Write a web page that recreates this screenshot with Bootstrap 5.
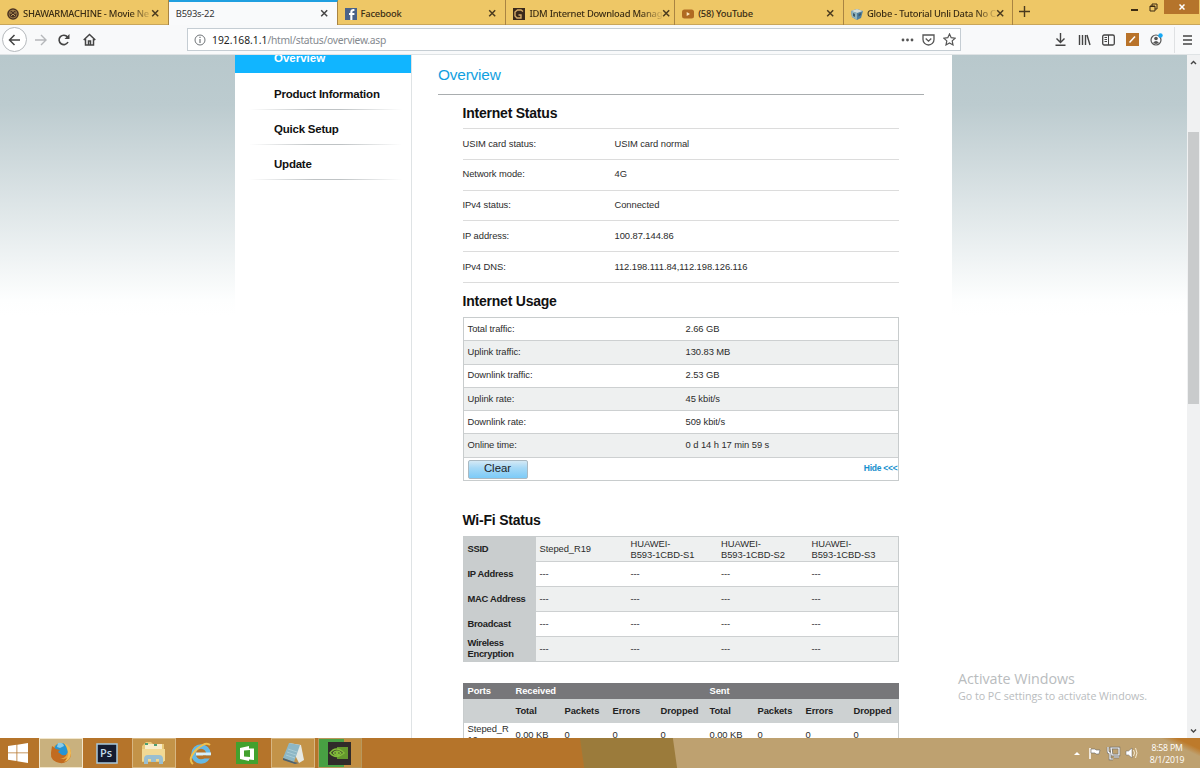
<!DOCTYPE html>
<html lang="en">
<head>
    <meta charset="UTF-8">
    <meta name="viewport" content="width=device-width, initial-scale=1.0">
    <title>B593s-22</title>
    <link href="https://cdn.jsdelivr.net/npm/bootstrap@5.3.3/dist/css/bootstrap.min.css" rel="stylesheet">
    <style>
        :root {
            --gold: #eec766;
            --huawei-blue: #11b5ff;
        }
        body {
            width: 1200px;
            height: 768px;
            font-family: "Liberation Sans", Arial, sans-serif;
            font-size: 9.4px;
            line-height: 11px;
            letter-spacing: -.06px;
            color: #2c2c2c;
        }
        svg { display: block; flex: none; }

        /* browser chrome */
        .tab-strip {
            height: 25px;
            background: var(--gold);
            border-bottom: 1px solid #c9a65a;
            font-family: "Noto Sans", "Open Sans", sans-serif;
            font-size: 9.4px;
            letter-spacing: -.24px;
            color: #3a2c14;
        }
        .tab-item {
            width: 168.8px;
            height: 25px;
            padding: 2px 8px 0 7px;
            border-right: 1px solid #a98442;
        }
        .tab-item:not(.current) { font-weight: 500; }
        .tab-item.current {
            background: #f9fafb;
            border-top: 2px solid #1f9fe0;
            padding-top: 0;
            color: #333;
        }
        .tab-label { flex: 1; height: 14px; line-height: 14px; margin-left: 4px; white-space: nowrap; }
        .fade-end { -webkit-mask-image: linear-gradient(90deg, #000 84%, transparent 102%); mask-image: linear-gradient(90deg, #000 84%, transparent 102%); }
        .new-tab { padding: 6px 0 0 6px; }
        .win-min { margin: 9px 11px 0 0; }
        .win-max { margin: 3px 6px 0 0; }
        .win-close { width: 35px; height: 14px; margin-right: 1px; background: #b5742b; }
        .tool-row { height: 30px; background: #f8f9fa; border-bottom: 1px solid #dfe3e5; }
        .back-btn { width: 25px; height: 25px; margin-left: 2px; border: 1px solid #b5b9bc; background: #fff; }
        .nav-icons { width: 187px; }
        .url-field {
            width: 774px;
            height: 23px;
            border: 1px solid #c5cdd3;
            background: #fff;
            padding: 0 4px 0 6px;
            font-family: "Noto Sans", "Open Sans", sans-serif;
            font-size: 10.3px;
            letter-spacing: -.28px;
            color: #858a8f;
        }
        .url-text { margin-left: 6px; padding-top: 2px; }
        .url-field b { font-weight: 400; color: #222; letter-spacing: 0; }
        .tool-icons { padding-left: 93px; gap: 11px; }

        /* router page */
        .viewport-area { height: 683px; overflow: hidden; }
        .page-bg { width: 1187px; background: linear-gradient(#b8c8cc 0, #bccbcf 50px, #fdfefe 245px, #fff 260px); }
        .router-page { width: 717px; margin-left: 235px; background: #fff; }
        .side-menu { width: 177px; border-right: 1px solid #dfe3e5; font-size: 11.5px; letter-spacing: -.22px; font-weight: 700; color: #111; }
        .menu-link { height: 35.2px; padding: 12px 0 0 39px; line-height: 14px; background: linear-gradient(90deg, transparent 8%, #bfc3c5 45%, #bfc3c5 60%, transparent 95%) bottom / 100% 1px no-repeat; }
        .menu-current { height: 18px; margin-bottom: 1.5px; background: var(--huawei-blue); color: #fff; padding: 0 0 0 39px; line-height: 14px; letter-spacing: 0; }
        .menu-current span { display: block; margin-top: -4px; height: 14px; }
        .main-col { padding-left: 26px; }
        .page-title { width: 486px; height: 40px; padding-top: 11px; border-bottom: 1px solid #a9adaf; font-size: 15.4px; letter-spacing: -.2px; line-height: 18px; color: #129fdf; }
        .section-body { width: 436px; margin-left: 24.5px; }
        .section-title { font-size: 14px; font-weight: 700; letter-spacing: -.22px; line-height: 17px; color: #111; margin: 0; }
        .title-first { height: 33px; padding-top: 10px; }
        .title-usage { height: 34px; padding-top: 10px; }
        .title-wifi { height: 55px; padding-top: 31px; }
        .status-list { border-top: 1px solid #dcdcdc; }
        .status-row { height: 30.8px; padding-bottom: 1.5px; border-bottom: 1px solid #dcdcdc; }
        .status-row span:first-child { width: 152px; }
        .usage-box { border: 1px solid #c8cccd; }
        .usage-row { height: 23.3px; padding: 0 0 2px 4px; border-bottom: 1px solid #cdd0d1; }
        .usage-row:nth-child(even) { background: #eef0f0; }
        .usage-row span:first-child { width: 218px; }
        .usage-foot { height: 22.6px; padding-left: 4px; }
        .clear-btn {
            width: 60px; height: 19px;
            padding: 0 0 3px;
            border: 1px solid #aab9c2;
            border-radius: 2px;
            background: linear-gradient(#d4e9f5, #a7d9f6 40%, #7ccbf8);
            font-size: 11.4px;
            line-height: 14px;
            color: #222;
        }
        .hide-link { color: #168fcd; font-weight: 700; font-size: 8.5px; letter-spacing: -.25px; padding-bottom: 1px; }
        .wifi-box { border: 1px solid #c8cccd; }
        .wifi-row { display: grid; grid-template-columns: 72px 91px 90.5px 90.5px 90px; height: 24.8px; }
        .wifi-row > div { display: flex; align-items: center; padding: 0 0 1px 4px; border-bottom: 1px solid #cdd0d1; }
        .wifi-row > div:first-child { background: #c9cdce; border-color: #c9cdce; font-weight: 700; letter-spacing: -.28px; color: #222; }
        .wifi-row:nth-child(odd) { background: #eef0f0; }
        .wifi-row:last-child > div { border-bottom: 0; }
        .ports-box { margin-top: 21px; border: 1px solid #c8cccd; border-top: 0; }
        .ports-row { display: grid; grid-template-columns: 48px 49px 48px 48px 49px 48px 48px 48px 48px; padding-left: 4px; align-items: center; }
        .ports-head { height: 16px; background: #77777a; color: #fff; font-weight: 700; letter-spacing: -.1px; margin: 0 -1px; padding: 0 0 2px 5px; }
        .ports-sub { height: 24px; padding-bottom: 2px; background: #cdd1d2; color: #222; font-weight: 700; letter-spacing: -.1px; }
        .scroll-col { width: 13px; background: #f0f1f2; }
        .scroll-thumb { width: 11px; height: 272px; margin-top: 63px; background: #c9cbcc; }
        .activate-note { position: absolute; left: 958px; top: 670px; color: #b9bcbe; font-family: "Open Sans", "Noto Sans", sans-serif; font-size: 10.7px; letter-spacing: -.03px; line-height: 16px; }
        .activate-note div { font-size: 14.3px; line-height: 18px; }

        /* taskbar */
        .task-bar {
            height: 30px;
            background:
                linear-gradient(205deg, #bd7a2b 10px, transparent 17px),
                linear-gradient(82deg, #b5742a 0 578px, #9b7b3b 579px 670px, #bea170 671px);
        }
        .task-btn { width: 44px; height: 30px; display: flex; align-items: center; justify-content: center; margin-right: 2.5px; border: 1px solid transparent; }
        .task-start { width: 36px; }
        .task-open { background: #c39348; border-color: #d7b682; }
        .task-front { background: #c9b17e; border-color: #f2e6cb; }
        .task-green { background: linear-gradient(90deg, #48a043 60%, #c18e42 60%); border: 1px solid #b9985c; }
        .tray-clock { width: 52px; margin-right: 7px; font-family: "Open Sans", "Noto Sans", sans-serif; font-size: 8.7px; line-height: 12.5px; color: #fff; letter-spacing: -.2px; padding-top: 2px; }
    </style>
</head>
<body class="d-flex flex-column overflow-hidden bg-white">

<div class="tab-strip d-flex flex-shrink-0">
    <div class="tab-item d-flex align-items-center">
        <svg width="12" height="12" viewBox="0 0 12 12"><circle cx="6" cy="6" r="5.8" fill="#4b3321"/><circle cx="6" cy="6" r="4" fill="none" stroke="#a8854e" stroke-width=".8"/><path d="M3 5h2M7 5h2M4 8l2-2 2 2M6 2v2" stroke="#c19c5c" fill="none"/></svg>
        <div class="tab-label fade-end">SHAWARMACHINE - Movie Ne</div>
        <svg width="9" height="9" viewBox="0 0 9 9"><path d="M1.2 1.2l6 6m0-6l-6 6" stroke="#4a3a1e" stroke-width="1.5"/></svg>
    </div>
    <div class="tab-item current d-flex align-items-center">
        <div class="tab-label ms-0">B593s-22</div>
        <svg width="9" height="9" viewBox="0 0 9 9"><path d="M1.2 1.2l6 6m0-6l-6 6" stroke="#444" stroke-width="1.5"/></svg>
    </div>
    <div class="tab-item d-flex align-items-center">
        <svg width="12" height="12" viewBox="0 0 12 12"><path d="M0 0h12v12H0z" fill="#4a6288"/><path d="M7.4 12V7h2V5h-2V4q0-1.2 2-1V1Q5.3.7 5.3 4v1H4v2h1.3v5z" fill="#fff"/></svg>
        <div class="tab-label">Facebook</div>
        <svg width="9" height="9" viewBox="0 0 9 9"><path d="M1.2 1.2l6 6m0-6l-6 6" stroke="#4a3a1e" stroke-width="1.5"/></svg>
    </div>
    <div class="tab-item d-flex align-items-center">
        <svg width="12" height="12" viewBox="0 0 12 12"><path d="M0 0h12v12H0z" fill="#3a291b"/><path d="M10 3.5L8 2H4.500L2 4v4l2 2h4V7H5.500" fill="none" stroke="#d5aa68" stroke-width="1.4"/></svg>
        <div class="tab-label fade-end">IDM Internet Download Manag</div>
        <svg width="9" height="9" viewBox="0 0 9 9"><path d="M1.2 1.2l6 6m0-6l-6 6" stroke="#4a3a1e" stroke-width="1.5"/></svg>
    </div>
    <div class="tab-item d-flex align-items-center">
        <svg width="12" height="12" viewBox="0 0 12 12"><rect y="1.5" width="12" height="9" rx="2.5" fill="#b06a22"/><path d="M4.7 4l3.3 2-3.3 2z" fill="#fbe6bd"/></svg>
        <div class="tab-label">(58) YouTube</div>
        <svg width="9" height="9" viewBox="0 0 9 9"><path d="M1.2 1.2l6 6m0-6l-6 6" stroke="#4a3a1e" stroke-width="1.5"/></svg>
    </div>
    <div class="tab-item d-flex align-items-center">
        <svg width="12" height="12" viewBox="0 0 12 12"><path d="M0 3l6-2 6 2-2 7-4 2-5-3z" fill="#4e7fa0"/><path d="M0 3l6-2 6 2-6 2z" fill="#d3dbd6"/><path d="M6 5v7l-5-3-1-6z" fill="#8fb3bd"/><path d="M2 5l2 1v3L2 8zM7.500 6L10 5v2L7.500 8.500z" fill="#3e5968"/></svg>
        <div class="tab-label fade-end">Globe - Tutorial Unli Data No C</div>
        <svg width="9" height="9" viewBox="0 0 9 9"><path d="M1.2 1.2l6 6m0-6l-6 6" stroke="#4a3a1e" stroke-width="1.5"/></svg>
    </div>
    <div class="new-tab flex-fill"><svg width="11" height="11" viewBox="0 0 11 11"><path d="M5.500 0v11M0 5.500h11" stroke="#4a3a1e" stroke-width="1.4"/></svg></div>
    <svg class="win-min" width="7" height="2"><path d="M0 0h7v2H0z" fill="#3c2b12"/></svg>
    <svg class="win-max" width="9" height="9" viewBox="0 0 9 9" fill="none" stroke="#3c2b12"><path d="M1 3h5v5H1zM1 3.500h5M3 3V1h5v5H6"/></svg>
    <div class="win-close d-flex align-items-center justify-content-center"><svg width="6" height="6" viewBox="0 0 6 6"><path d="M.5.5l5 5m0-5l-5 5" stroke="#fff" stroke-width="1.5"/></svg></div>
</div>

<div class="tool-row d-flex align-items-center flex-shrink-0">
    <div class="nav-icons d-flex align-items-center flex-shrink-0">
        <div class="back-btn rounded-circle d-flex align-items-center justify-content-center"><svg width="13" height="12" viewBox="0 0 13 12"><path d="M12 6H1.500M6.500 1l-5 5 5 5" fill="none" stroke="#444" stroke-width="1.5"/></svg></div>
        <svg class="ms-2" width="12" height="12" viewBox="0 0 12 12"><path d="M0 6h10.500M6 1l5 5-5 5" fill="none" stroke="#b5b7ba" stroke-width="1.4"/></svg>
        <svg class="ms-2 me-1" width="20" height="14" viewBox="0 0 20 14"><path d="M12.500 4A4.700 4.700 0 1 0 13 9" fill="none" stroke="#444" stroke-width="1.6"/><path d="M14.500 1v5h-5z" fill="#444"/></svg>
        <svg class="ms-1" width="13" height="13" viewBox="0 0 13 13"><path d="M.7 7l5.800-5.500L12.300 7M2.500 6v6h8V6M5.500 12V8h2v4" fill="none" stroke="#444" stroke-width="1.5"/></svg>
    </div>
    <div class="url-field d-flex align-items-center flex-shrink-0">
        <svg width="12" height="12" viewBox="0 0 12 12"><circle cx="6" cy="6" r="5" fill="none" stroke="#707478"/><path d="M6 5v4M6 2.800v1.300" stroke="#707478" stroke-width="1.2"/></svg>
        <div class="url-text flex-fill"><b>192.168.1.1</b>/html/status/overview.asp</div>
        <svg width="13" height="4" viewBox="0 0 13 4" fill="#555"><circle cx="2" cy="2" r="1.4"/><circle cx="6.5" cy="2" r="1.4"/><circle cx="11" cy="2" r="1.4"/></svg>
        <svg class="ms-2" width="13" height="12" viewBox="0 0 13 12"><path d="M1 1h11v4.500a5.500 5.500 0 0 1-11 0zM3.700 4.500l2.800 2.700 2.800-2.700" fill="none" stroke="#555" stroke-width="1.3"/></svg>
        <svg class="ms-2" width="13" height="13" viewBox="0 0 13 13"><path d="M6.500 1l1.700 3.700 4 .5-3 2.700.8 4-3.500-2L3 11.900l.8-4-3-2.700 4-.5z" fill="none" stroke="#555" stroke-width="1.2"/></svg>
    </div>
    <div class="tool-icons d-flex align-items-center">
        <svg width="13" height="13" viewBox="0 0 13 13"><path d="M6.500 0v9M2.500 5.500l4 4 4-4M1.500 12.200h10" fill="none" stroke="#444" stroke-width="1.4"/></svg>
        <svg width="13" height="12" viewBox="0 0 13 12"><path d="M1.500 1v10M4.500 1v10M7.500 1v10M9 1l3 10" stroke="#444" stroke-width="1.4"/></svg>
        <svg width="13" height="12" viewBox="0 0 13 12"><rect x=".7" y="1" width="11.6" height="10" rx="1.5" fill="none" stroke="#444" stroke-width="1.3"/><path d="M6.500 1v10M2.500 3.500h2.500M2.500 5.500h2.500M2.500 7.500h2.500" stroke="#444"/></svg>
        <svg width="13" height="13" viewBox="0 0 13 13"><path d="M0 0h13v13H0z" fill="#b9732a"/><path d="M3.500 9.500l5.500-6" stroke="#fff" stroke-width="1.5"/></svg>
        <svg width="13" height="13" viewBox="0 0 13 13"><circle cx="6" cy="7" r="5" fill="none" stroke="#555" stroke-width="1.2"/><circle cx="6" cy="5.500" r="1.8" fill="#555"/><path d="M3 10q3-4 6 0l-3 1z" fill="#555"/><circle cx="10.5" cy="2.5" r="2.2" fill="#15a9f5"/></svg>
        <svg width="24" height="26" viewBox="0 0 24 26"><path d="M-2.500 0M.5 0v26" stroke="#dfe1e3"/><path d="M9 9h9M9 13h9M9 17h9" stroke="#444" stroke-width="1.6"/></svg>
    </div>
</div>

<div class="viewport-area d-flex flex-shrink-0">
    <div class="page-bg d-flex">
        <div class="router-page d-flex">
            <div class="side-menu flex-shrink-0">
                <div class="menu-current overflow-hidden"><span>Overview</span></div>
                <div class="menu-link">Product Information</div>
                <div class="menu-link">Quick Setup</div>
                <div class="menu-link">Update</div>
            </div>
            <div class="main-col">
                <div class="page-title">Overview</div>
                <div class="section-body">
                    <h2 class="section-title title-first">Internet Status</h2>
                    <div class="status-list">
                        <div class="status-row d-flex align-items-center"><span>USIM card status:</span><span>USIM card normal</span></div>
                        <div class="status-row d-flex align-items-center"><span>Network mode:</span><span>4G</span></div>
                        <div class="status-row d-flex align-items-center"><span>IPv4 status:</span><span>Connected</span></div>
                        <div class="status-row d-flex align-items-center"><span>IP address:</span><span>100.87.144.86</span></div>
                        <div class="status-row d-flex align-items-center"><span>IPv4 DNS:</span><span>112.198.111.84,112.198.126.116</span></div>
                    </div>
                    <h2 class="section-title title-usage">Internet Usage</h2>
                    <div class="usage-box">
                        <div class="usage-row d-flex align-items-center"><span>Total traffic:</span><span>2.66 GB</span></div>
                        <div class="usage-row d-flex align-items-center"><span>Uplink traffic:</span><span>130.83 MB</span></div>
                        <div class="usage-row d-flex align-items-center"><span>Downlink traffic:</span><span>2.53 GB</span></div>
                        <div class="usage-row d-flex align-items-center"><span>Uplink rate:</span><span>45 kbit/s</span></div>
                        <div class="usage-row d-flex align-items-center"><span>Downlink rate:</span><span>509 kbit/s</span></div>
                        <div class="usage-row d-flex align-items-center"><span>Online time:</span><span>0 d 14 h 17 min 59 s</span></div>
                        <div class="usage-foot d-flex align-items-center justify-content-between">
                            <button type="button" class="btn clear-btn">Clear</button>
                            <span class="hide-link">Hide &lt;&lt;&lt;</span>
                        </div>
                    </div>
                    <h2 class="section-title title-wifi">Wi-Fi Status</h2>
                    <div class="wifi-box">
                        <div class="wifi-row"><div>SSID</div><div>Steped_R19</div><div>HUAWEI-<br>B593-1CBD-S1</div><div>HUAWEI-<br>B593-1CBD-S2</div><div>HUAWEI-<br>B593-1CBD-S3</div></div>
                        <div class="wifi-row"><div>IP Address</div><div>---</div><div>---</div><div>---</div><div>---</div></div>
                        <div class="wifi-row"><div>MAC Address</div><div>---</div><div>---</div><div>---</div><div>---</div></div>
                        <div class="wifi-row"><div>Broadcast</div><div>---</div><div>---</div><div>---</div><div>---</div></div>
                        <div class="wifi-row"><div>Wireless<br>Encryption</div><div>---</div><div>---</div><div>---</div><div>---</div></div>
                    </div>
                    <div class="ports-box">
                        <div class="ports-row ports-head"><span>Ports</span><span>Received</span><span></span><span></span><span></span><span>Sent</span></div>
                        <div class="ports-row ports-sub"><span></span><span>Total</span><span>Packets</span><span>Errors</span><span>Dropped</span><span>Total</span><span>Packets</span><span>Errors</span><span>Dropped</span></div>
                        <div class="ports-row"><span>Steped_R<br>19</span><span>0.00 KB</span><span>0</span><span>0</span><span>0</span><span>0.00 KB</span><span>0</span><span>0</span><span>0</span></div>
                    </div>
                </div>
            </div>
        </div>
    </div>
    <div class="scroll-col d-flex flex-column align-items-center">
        <svg class="mt-1" width="7" height="10" viewBox="0 0 7 10"><path d="M1 5l2.500-2.500L6 5" fill="none" stroke="#444" stroke-width="1.4"/></svg>
        <div class="scroll-thumb"></div>
        <svg class="mt-auto mb-1" width="7" height="6" viewBox="0 0 7 6"><path d="M1 1.500L3.500 4 6 1.500" fill="none" stroke="#444" stroke-width="1.4"/></svg>
    </div>
</div>
<div class="activate-note"><div>Activate Windows</div>Go to PC settings to activate Windows.</div>

<div class="task-bar d-flex align-items-center flex-shrink-0">
    <div class="task-btn task-start"><svg width="20" height="20" viewBox="0 0 20 20" fill="#fff"><path d="M0 3l8.500-1.200v7.700H0zM9.300 1.700L20 0v9.500H9.300zM0 10.300h8.500V18L0 16.800zM9.300 10.300H20V20L9.300 18.200z"/></svg></div>
    <div class="task-btn task-front"><svg width="24" height="24" viewBox="0 0 24 24"><circle cx="12" cy="12" r="10" fill="#e6a23d"/><circle cx="12" cy="9" r="7" fill="#2695d4"/><path d="M3 5l4 3 4 1-2 2 4 3q3 1 5-1-2 5-7 4 5 3 9-2 2-4-1-9 5 5 2 11-4 6-10 5Q1 20 2 12z" fill="#c26b20"/><path d="M15 2q7 3 7 10t-7 9q5-5 4-10t-4-9z" fill="#f0bd57"/><path d="M9 2q5-1 6 3l-4 2-3-1z" fill="#8bcbe8"/></svg></div>
    <div class="task-btn"><svg width="22" height="21" viewBox="0 0 22 21"><path d="M1 1h20v19H1z" fill="#141b30" stroke="#a6c8dc" stroke-width="1.5"/><text x="4" y="14" font-size="11" font-weight="600" fill="#c4dcea" font-family="Open Sans, sans-serif">Ps</text></svg></div>
    <div class="task-btn task-open"><svg width="25" height="24" viewBox="0 0 25 24"><path d="M1 5l4-4h5l2 2h11v18H1z" fill="#e9ca79"/><path d="M4 3h17v5H4z" fill="#f8edca"/><path d="M1 8h23v12H1z" fill="#f1d994"/><path d="M3 23v-5q0-4 4-4h11q4 0 4 4v5h-4v-5h-3v3h-5v-3H7v5z" fill="#99bfd1"/><path d="M4 3h3M13 4h3" stroke="#4c9f72" stroke-width="2"/></svg></div>
    <div class="task-btn"><svg width="23" height="23" viewBox="0 0 23 23"><circle cx="12" cy="12" r="7.500" fill="none" stroke="#65b9e5" stroke-width="4.5"/><path d="M7 12h15" stroke="#d8f0fa" stroke-width="3"/><path d="M14 15h9" stroke="#b5742a" stroke-width="3"/><path d="M4 22Q-2 17 8 7 17-1 21 3" fill="none" stroke="#efc04d" stroke-width="2"/></svg></div>
    <div class="task-btn"><svg width="22" height="22" viewBox="0 0 22 22"><path d="M0 0h22v22H0z" fill="#42a12e"/><path d="M4 6l9-2v2.500h5V18l-5-.5V19l-9-2z" fill="#fff"/><path d="M8 8.500l6-.5v7l-6-.5z" fill="#42a12e"/></svg></div>
    <div class="task-btn task-open"><svg width="25" height="23" viewBox="0 0 25 23"><path d="M8 1l12 2 3 15-5 3z" fill="#e6e9e3"/><path d="M8 1l11 2-6 17-11-4z" fill="#8db7c5"/><path d="M7 7l9 3M6 10l9 3M5 13l9 3" stroke="#a9cbd5"/><path d="M2 16l11 4 5 1-4 1-12-4z" fill="#4b6170"/></svg></div>
    <div class="task-btn task-green"><svg width="23" height="23" viewBox="0 0 23 23"><path d="M0 0h23v23H0z" fill="#302b2a"/><path d="M9 5h11v12H9z" fill="#64992d"/><path d="M2 11q6-8 14 0-8 7-14 0zM5 11q4-4 8 0-4 4-8 0" fill="#302b2a" stroke="#83bd3a" stroke-width="1.5"/><circle cx="9" cy="11" r="1.7" fill="#83bd3a"/></svg></div>
    <div class="ms-auto d-flex align-items-center">
        <svg width="68" height="16" viewBox="0 0 68 16"><path d="M1 10l3-3 3 3z" fill="#fff"/><path d="M17 3v11" stroke="#fff" stroke-width="1.5"/><path d="M18 4h4l1 1h4l-1 4h-3l-1-1h-4z" fill="#fff" stroke="#666" stroke-width=".6"/><path d="M38 3h8v7h-7zM41 12h5M35 2v4q0 2 2 2v6h3" fill="none" stroke="#666" stroke-width="2.4"/><path d="M38 3h8v7h-7zM41 12h5M35 2v4q0 2 2 2v6h3" fill="none" stroke="#fff" stroke-width="1.2"/><path d="M53 6h2.500L59 3v10l-3.500-3H53z" fill="#fff" stroke="#666" stroke-width=".5"/><path d="M60.500 5q2 3 0 6M62.500 3q3 5 0 10" fill="none" stroke="#f6ead2"/></svg>
        <div class="tray-clock text-center">8:58 PM<br>8/1/2019</div>
    </div>
</div>

<script src="https://cdn.jsdelivr.net/npm/bootstrap@5.3.3/dist/js/bootstrap.bundle.min.js"></script>
</body>
</html>
